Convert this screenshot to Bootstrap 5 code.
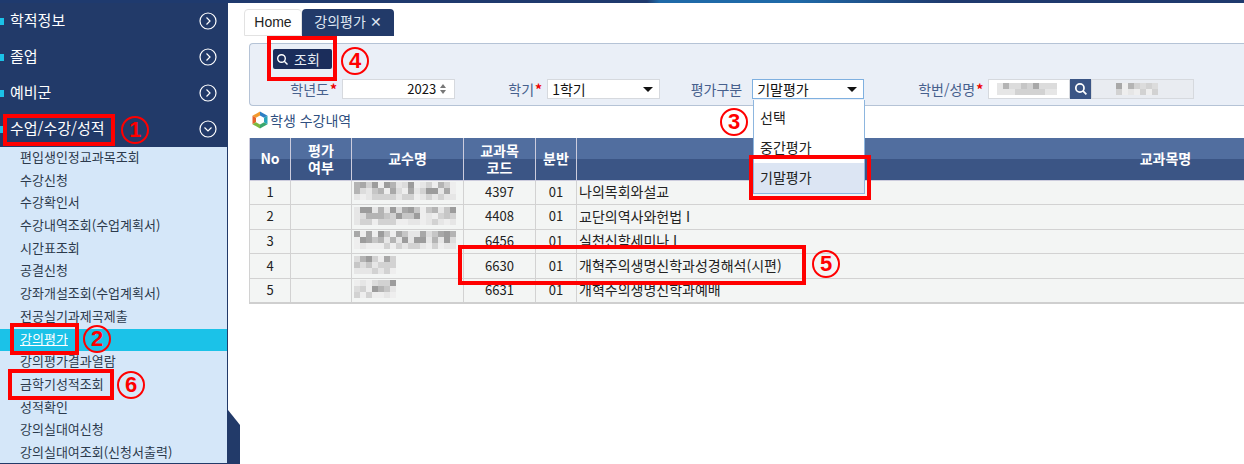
<!DOCTYPE html>
<html lang="ko">
<head>
  <meta charset="UTF-8">
  <meta name="viewport" content="width=device-width, initial-scale=1.0">
  <title>강의평가</title>
  <link href="https://cdn.jsdelivr.net/npm/bootstrap@5.3.0/dist/css/bootstrap.min.css" rel="stylesheet">
  <style>
    html, body { height: 464px; overflow: hidden; }
    body { font-family: "Noto Sans CJK KR", "Liberation Sans", sans-serif; font-size: 14px; color: #222; background: #fff; position: relative; }
    .top-strip { height: 3px; background: linear-gradient(90deg, #1f3a6e 0, #1f3a6e 52%, #1f6aa8 53%, #1f6aa8 64%, #1f3a6e 76%); }
    .page-body { height: 461px; }
    .side-menu { width: 228px; flex: none; background: #223a69; height: 461px; overflow: hidden; }
    .menu-head { height: 36px; padding: 0 10px 1px; color: #fff; font-size: 15px; position: relative; }
    .menu-head::before { content: ""; position: absolute; left: 0; top: 15px; width: 4px; height: 7px; background: #1bc2e8; }
    .menu-sub { background: #d5e7f9; margin-right: 1px; height: 316px; overflow: hidden; font-size: 13px; }
    .menu-sub div { height: 22.7px; line-height: 20.7px; padding-left: 20px; color: #2c3a4c; white-space: nowrap; }
    .menu-sub .is-on { background: #1bc2e8; color: #fff; text-decoration: underline; }
    .side-notch { position: absolute; left: 228px; top: 410px; width: 12px; height: 54px; background: #223a69; clip-path: polygon(0 0, 100% 28%, 100% 100%, 0 100%); }
    .main-area { flex: 1; min-width: 0; padding: 6px 0 0 16px; overflow: hidden; }
    .tab-home, .tab-now { height: 27px; line-height: 24px; border-radius: 4px 4px 0 0; }
    .tab-home { width: 58px; text-align: center; border: 1px solid #e2e2e2; color: #222; font: 14px/24px "Liberation Sans", sans-serif; }
    .tab-now { width: 92px; text-align: center; background: #223a69; color: #dfe6f2; }
    .filter-box { margin: 7px 0 0 5px; height: 63px; background: #eaeff7; border: 1px solid #b5c3d6; border-right: 0; border-radius: 4px 0 0 4px; position: relative; }
    .btn-find { display: flex; align-items: center; gap: 5px; margin: 5px 0 0 23px; width: 59px; height: 20px; padding: 0 0 0 3px; background: #1b2d5b; color: #e8edf5; border: 0; border-radius: 2px; font-size: 14px; }
    .filter-row { margin-top: 10px; height: 20px; color: #47608d; }
    .lbl { text-align: right; white-space: nowrap; }
    .req { color: #e00; margin: 0 5px 0 1px; font-weight: 700; }
    .fld { height: 20px; background: #fff; border: 1px solid #d6d9de; color: #111; display: flex; align-items: center; padding: 0 4px; }
    .fld-on { border-color: #7fb0e0; }
    .num-val { font-size: 13px; }
    .caret-down { margin-left: auto; margin-right: 2px; width: 0; height: 0; border: 5px solid transparent; border-top: 5px solid #111; border-bottom: 0; }
    .find-btn { width: 21px; height: 20px; flex: none; background: #3b5585; display: flex; align-items: center; justify-content: center; }
    .drop-list { position: absolute; left: 753px; top: 100px; width: 112px; height: 94px; padding-top: 3px; background: #fff; border: 1px solid #8db6df; border-top: 0; z-index: 3; }
    .drop-list div { padding-left: 6px; height: 30px; line-height: 28px; }
    .drop-list .is-sel { background: #dce5f3; }
    .section-title { margin: 3px 0 0 7px; height: 22px; color: #2f4f80; gap: 1px; }
    .grid-wrap { margin: 7px 0 0 5px; overflow: hidden; }
    table.grade-grid { table-layout: fixed; width: 1505px; border-collapse: collapse; margin: 0; }
    .grade-grid th { height: 42px; padding: 0; text-align: center; vertical-align: middle; color: #fff; font-weight: 700; line-height: 17px; border: 1px solid #ccd; border-top: 0; background: linear-gradient(180deg, #516e9f 0, #516e9f 50%, #3b5585 50%, #3b5585 100%); }
    .grade-grid td { height: 24.6px; padding: 0 0 2px; text-align: center; vertical-align: middle; background: #f3f5f4; border: 1px solid #d2d2d2; color: #222; line-height: 1; font-size: 13px; }
    .grade-grid td.txt { text-align: left; padding-left: 2px; font-size: 14px; }
    .grade-grid tbody tr:last-child td { border-bottom: 2px solid #cfcfcf; }
    .mosaic { display: block; }
    .grade-grid .mosaic { margin-left: 2px; }
    .red-box { position: absolute; border: 4px solid #f00; z-index: 5; pointer-events: none; }
    .num-mark { position: absolute; width: 28px; height: 28px; border: 2px solid #f00; border-radius: 50%; color: #f00; font: 700 22px/24px "Liberation Sans", sans-serif; text-align: center; z-index: 6; }
  </style>
</head>
<body>
<div class="top-strip"></div>
<div class="d-flex page-body">
  <div class="side-menu">
    <div class="menu-head d-flex align-items-center justify-content-between">학적정보<svg width="20" height="20" viewBox="0 0 20 20" fill="none" stroke="#fff" stroke-width="1.2"><circle cx="10" cy="10" r="8"/><path d="M8.5 6.5l3.5 3.5-3.5 3.5"/></svg></div>
    <div class="menu-head d-flex align-items-center justify-content-between">졸업<svg width="20" height="20" viewBox="0 0 20 20" fill="none" stroke="#fff" stroke-width="1.2"><circle cx="10" cy="10" r="8"/><path d="M8.5 6.5l3.5 3.5-3.5 3.5"/></svg></div>
    <div class="menu-head d-flex align-items-center justify-content-between">예비군<svg width="20" height="20" viewBox="0 0 20 20" fill="none" stroke="#fff" stroke-width="1.2"><circle cx="10" cy="10" r="8"/><path d="M8.5 6.5l3.5 3.5-3.5 3.5"/></svg></div>
    <div class="menu-head d-flex align-items-center justify-content-between">수업/수강/성적<svg width="20" height="20" viewBox="0 0 20 20" fill="none" stroke="#fff" stroke-width="1.2"><circle cx="10" cy="10" r="8"/><path d="M6.5 8.5l3.5 3.5 3.5-3.5"/></svg></div>
    <div class="menu-sub">
      <div>편입생인정교과목조회</div>
      <div>수강신청</div>
      <div>수강확인서</div>
      <div>수강내역조회(수업계획서)</div>
      <div>시간표조회</div>
      <div>공결신청</div>
      <div>강좌개설조회(수업계획서)</div>
      <div>전공실기과제곡제출</div>
      <div class="is-on">강의평가</div>
      <div>강의평가결과열람</div>
      <div>금학기성적조회</div>
      <div>성적확인</div>
      <div>강의실대여신청</div>
      <div>강의실대여조회(신청서출력)</div>
    </div>
  </div>
  <div class="main-area">
    <div class="d-flex">
      <div class="tab-home">Home</div>
      <div class="tab-now">강의평가 ✕</div>
    </div>
    <div class="filter-box">
      <button class="btn-find" type="button"><svg width="13" height="13" viewBox="0 0 13 13" fill="none" stroke="#fff" stroke-width="1.4"><circle cx="5.5" cy="5.5" r="3.8"/><path d="M8.3 8.3l3.2 3.2"/></svg>조회</button>
      <div class="filter-row d-flex align-items-center">
        <div class="lbl" style="width:79px">학년도</div><span class="req">*</span>
        <div class="fld" style="width:113px"><span class="ms-auto num-val">2023</span><svg class="ms-1 me-1" width="6" height="10" viewBox="0 0 6 10" fill="#777"><path d="M3 0l3 4H0zM3 10L0 6h6z"/></svg></div>
        <div class="lbl" style="width:79px">학기</div><span class="req">*</span>
        <div class="fld" style="width:113px">1학기<span class="caret-down"></span></div>
        <div class="lbl" style="width:82px">평가구분</div>
        <div class="fld fld-on" style="width:112px;margin-left:10px">기말평가<span class="caret-down"></span></div>
        <div class="lbl" style="width:111px">학번/성명</div><span class="req">*</span>
        <div class="d-flex" style="width:206px">
          <div class="fld flex-grow-1 p-0" id="idBlur"></div>
          <div class="find-btn"><svg width="14" height="14" viewBox="0 0 13 13" fill="none" stroke="#fff" stroke-width="1.6"><circle cx="5.5" cy="5.5" r="3.8"/><path d="M8.3 8.3l3.2 3.2"/></svg></div>
          <div class="fld p-0" id="nameBlur" style="width:103px;background:#e9ecf1"></div>
        </div>
      </div>
    </div>
    <div class="section-title d-flex align-items-center">
      <svg width="18" height="18" viewBox="0 0 18 18"><path d="M9 0.5L16.5 4.8 13 6.8 9 4.5z" fill="#2d7fc4"/><path d="M9 0.5L1.5 4.8 5 6.8 9 4.5z" fill="#f29a2e"/><path d="M1.5 4.8v8.4L5 11.2V6.8z" fill="#e5622a"/><path d="M1.5 13.2L9 17.5v-4L5 11.2z" fill="#7cb83f"/><path d="M16.5 13.2L9 17.5v-4l4-2.3z" fill="#3aa76d"/><path d="M16.5 4.8v8.4L13 11.2V6.8z" fill="#26a3b8"/></svg>
      학생 수강내역
    </div>
    <div class="grid-wrap">
      <table class="grade-grid">
        <colgroup><col style="width:41px"><col style="width:61px"><col style="width:112px"><col style="width:72px"><col style="width:41px"><col style="width:1178px"></colgroup>
        <thead>
          <tr><th>No</th><th>평가<br>여부</th><th>교수명</th><th>교과목<br>코드</th><th>분반</th><th>교과목명</th></tr>
        </thead>
        <tbody>
          <tr><td>1</td><td></td><td class="blurred" data-w="102"></td><td>4397</td><td>01</td><td class="txt">나의목회와설교</td></tr>
          <tr><td>2</td><td></td><td class="blurred" data-w="102"></td><td>4408</td><td>01</td><td class="txt">교단의역사와헌법 I</td></tr>
          <tr><td>3</td><td></td><td class="blurred" data-w="102"></td><td>6456</td><td>01</td><td class="txt">실천신학세미나 I</td></tr>
          <tr><td>4</td><td></td><td class="blurred" data-w="42"></td><td>6630</td><td>01</td><td class="txt">개혁주의생명신학과성경해석(시편)</td></tr>
          <tr><td>5</td><td></td><td class="blurred" data-w="42"></td><td>6631</td><td>01</td><td class="txt">개혁주의생명신학과예배</td></tr>
        </tbody>
      </table>
    </div>
  </div>
</div>
<div class="side-notch"></div>

<div class="drop-list">
  <div>선택</div>
  <div>중간평가</div>
  <div class="is-sel">기말평가</div>
</div>

<!-- annotations on top of the screenshot -->
<div class="red-box" style="left:3px;top:114px;width:112px;height:32px"></div>
<div class="num-mark" style="left:121px;top:116px">1</div>
<div class="red-box" style="left:10px;top:323px;width:69px;height:32px"></div>
<div class="num-mark" style="left:83px;top:325px">2</div>
<div class="num-mark" style="left:720px;top:108px">3</div>
<div class="red-box" style="left:749px;top:155px;width:122px;height:45px"></div>
<div class="red-box" style="left:267px;top:36px;width:70px;height:45px"></div>
<div class="num-mark" style="left:341px;top:47px">4</div>
<div class="red-box" style="left:458px;top:245px;width:348px;height:40px"></div>
<div class="num-mark" style="left:812px;top:250px">5</div>
<div class="red-box" style="left:8px;top:369px;width:106px;height:31px"></div>
<div class="num-mark" style="left:117px;top:371px">6</div>

<script>
  // pixelated name blur, same shades every load
  const shades = ['#b4b4b4','#dcdcdc','#9c9c9c','#e6e6e6','#c6c6c6','#eeeeee','#a8a8a8','#d2d2d2'];
  function mosaic(w, h, seed) {
    const size = 6;
    let rects = '';
    for (let y = 0; y < h; y += size) {
      for (let x = 0; x < w; x += size) {
        seed = (seed * 137 + 59) % 1009;
        const shade = y >= h - size ? 3 + (seed % 3) * 2 : seed % shades.length;
        rects += `<rect x="${x}" y="${y}" width="${size}" height="${size}" fill="${shades[shade]}"/>`;
      }
    }
    return `<svg class="mosaic" width="${w}" height="${h}">${rects}</svg>`;
  }
  document.querySelectorAll('.blurred').forEach((cell, i) => {
    cell.innerHTML = mosaic(Number(cell.dataset.w), 18, i * 13 + 5);
  });
  document.getElementById('idBlur').innerHTML = mosaic(60, 12, 9).replace('class="mosaic"', 'class="mosaic ms-2"');
  document.getElementById('nameBlur').innerHTML = mosaic(42, 12, 21).replace('class="mosaic"', 'class="mosaic ms-4"');
</script>
<script src="https://cdn.jsdelivr.net/npm/bootstrap@5.3.0/dist/js/bootstrap.bundle.min.js"></script>
</body>
</html>
